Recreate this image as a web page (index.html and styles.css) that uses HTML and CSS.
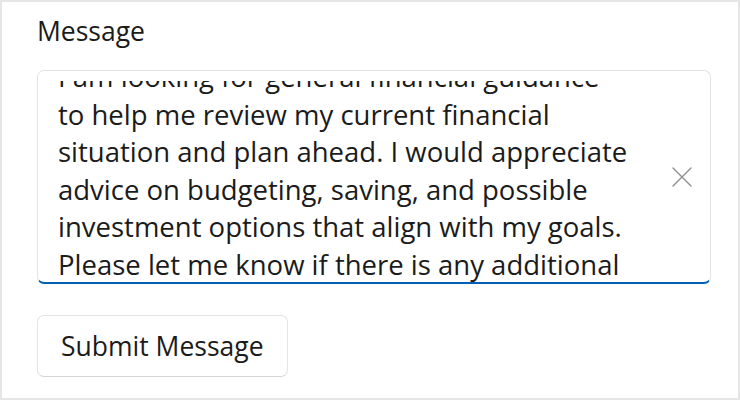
FILE: index.html
```html
<!DOCTYPE html>
<html lang="en">
<head>
<meta charset="utf-8">
<title>Message</title>
<link rel="stylesheet" href="styles.css">
</head>
<body>
<div class="frame">
  <label class="label" for="msg">Message</label>
  <div class="textbox" id="msg">
    <div class="scroll">
      <div class="text">
        <span class="line">I am looking for general financial guidance</span>
        <span class="line">to help me review my current financial</span>
        <span class="line">situation and plan ahead. I would appreciate</span>
        <span class="line">advice on budgeting, saving, and possible</span>
        <span class="line">investment options that align with my goals.</span>
        <span class="line">Please let me know if there is any additional</span>
      </div>
    </div>
    <button class="clear" type="button" aria-label="Clear text">
      <svg width="20" height="20" viewBox="0 0 20 20" aria-hidden="true">
        <path d="M1 1 L19 19 M19 1 L1 19" stroke="#8f8f8f" stroke-width="1.4" fill="none" stroke-linecap="round"/>
      </svg>
    </button>
  </div>
  <div class="actions">
    <button class="submit" type="button">Submit Message</button>
  </div>
</div>
</body>
</html>
```
FILE: styles.css
```css
html, body {
  margin: 0;
  padding: 0;
  background: #ffffff;
}

.frame {
  box-sizing: border-box;
  width: 740px;
  height: 400px;
  border: 2px solid #e6e6e6;
  background: #ffffff;
  padding: 11px 0 0 35px;
  display: flex;
  flex-direction: column;
  align-items: flex-start;
  font-family: "Open Sans", "Noto Sans", sans-serif;
  color: #1b1b1b;
}

.label {
  display: block;
  font-size: 26.5px;
  line-height: 37px;
  margin-bottom: 20px;
}

.textbox {
  box-sizing: border-box;
  width: 674px;
  height: 214px;
  border: 1px solid #e4e4e4;
  border-bottom: 2px solid #005fb8;
  border-radius: 7px;
  background: #ffffff;
  display: flex;
  align-items: center;
}

.scroll {
  flex: 1;
  align-self: stretch;
  overflow: hidden;
  margin-top: 10px;
  padding-left: 20px;
}

.text {
  margin-top: -23px;
  font-size: 27.5px;
  line-height: 37.5px;
  white-space: nowrap;
}

.line {
  display: block;
}

.clear {
  width: 20px;
  height: 20px;
  padding: 0;
  margin: 0 18px 0 10px;
  border: 0;
  background: transparent;
  display: flex;
}

.actions {
  margin-top: 31px;
}

.submit {
  box-sizing: border-box;
  height: 62px;
  padding: 0 23px;
  border: 1px solid #e4e4e4;
  border-bottom-color: #d6d6d6;
  border-radius: 7px;
  background: #ffffff;
  font-family: "Open Sans", "Noto Sans", sans-serif;
  font-size: 26.5px;
  line-height: 37px;
  color: #1b1b1b;
}
```
